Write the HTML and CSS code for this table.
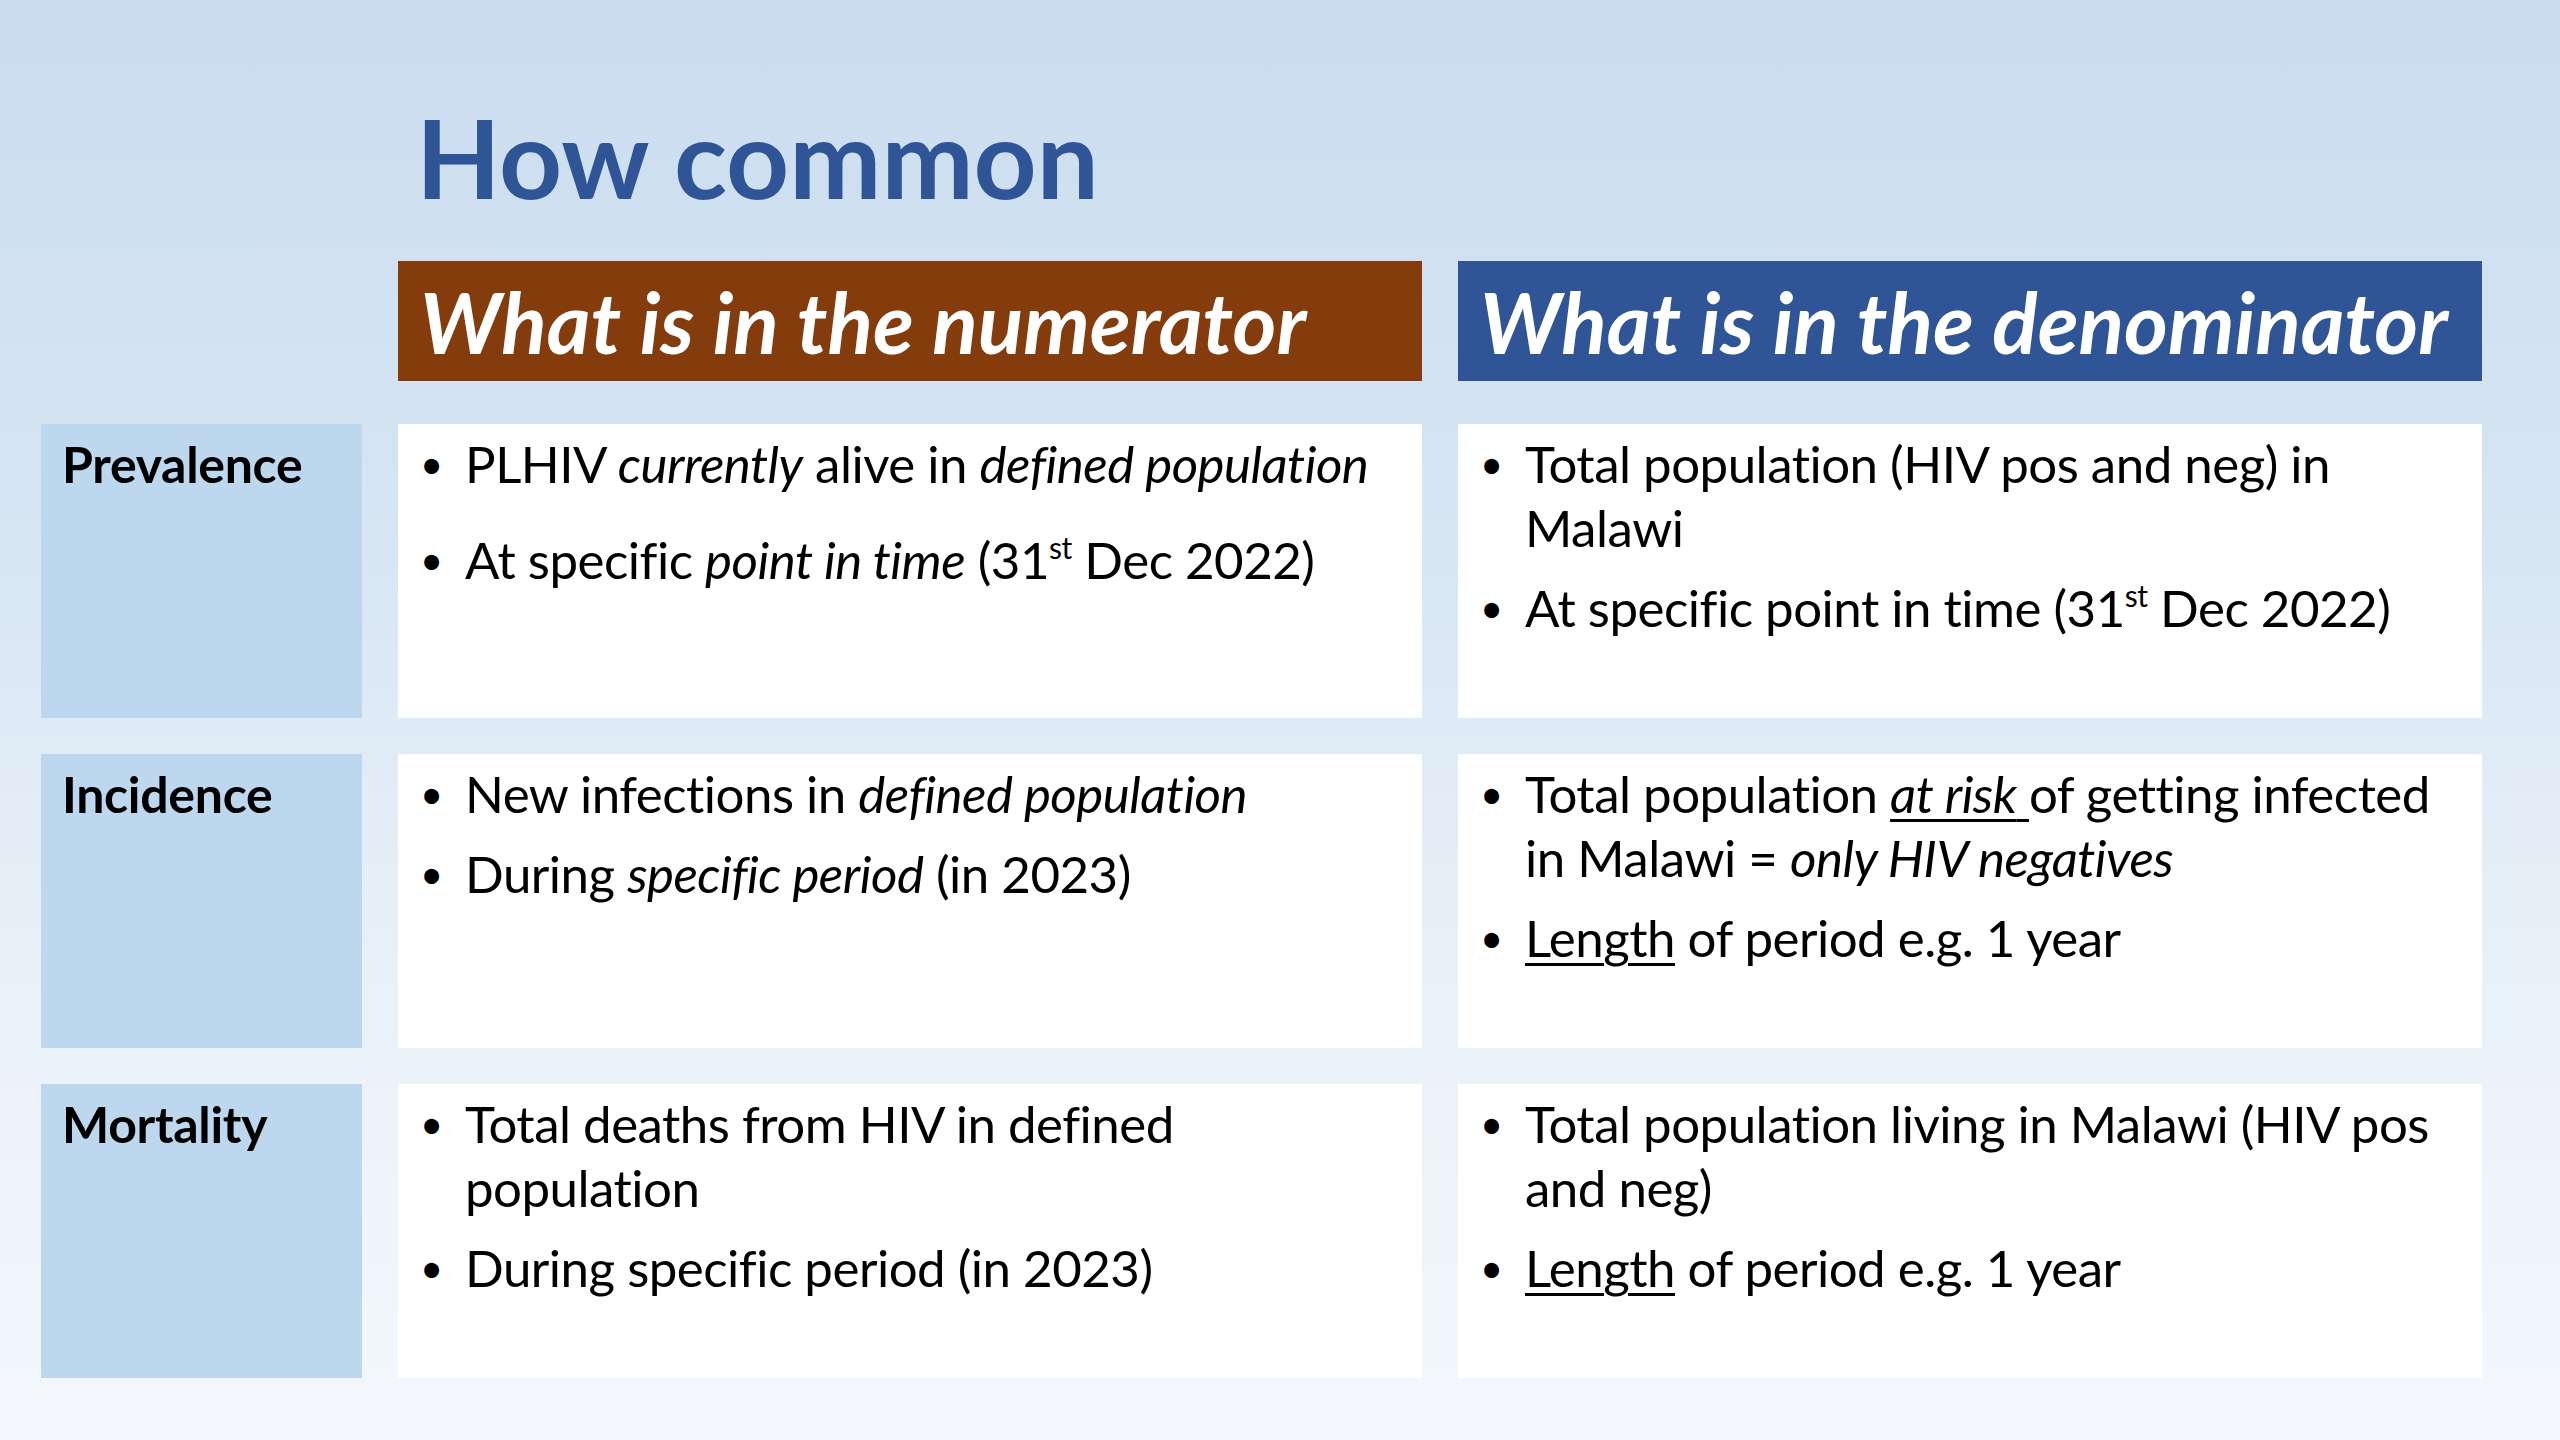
FILE: index.html
```html
<!DOCTYPE html>
<html lang="en">
<head>
<meta charset="utf-8">
<title>How common</title>
<link rel="stylesheet" href="styles.css">
</head>
<body>
<div class="slide">
  <h1 class="title">How common</h1>

  <div class="head">
    <div class="spacer"></div>
    <div class="hbox hbox-num">What is in the numerator</div>
    <div class="hbox hbox-den">What is in the denominator</div>
  </div>

  <div class="rows">
    <div class="label">Prevalence</div>
    <div class="cell">
      <ul class="list list-wide">
        <li><span class="dot">•</span><span class="txt">PLHIV <i>currently</i> alive in <i>defined population</i></span></li>
        <li><span class="dot">•</span><span class="txt">At specific <i>point in time</i> (31<sup>st</sup> Dec 2022)</span></li>
      </ul>
    </div>
    <div class="cell">
      <ul class="list">
        <li><span class="dot">•</span><span class="txt">Total population (HIV pos and neg) in<br>Malawi</span></li>
        <li><span class="dot">•</span><span class="txt">At specific point in time (31<sup>st</sup> Dec 2022)</span></li>
      </ul>
    </div>

    <div class="label">Incidence</div>
    <div class="cell">
      <ul class="list">
        <li><span class="dot">•</span><span class="txt">New infections in <i>defined population</i></span></li>
        <li><span class="dot">•</span><span class="txt">During <i>specific period</i> (in 2023)</span></li>
      </ul>
    </div>
    <div class="cell">
      <ul class="list">
        <li><span class="dot">•</span><span class="txt">Total population <u><i>at risk</i> </u>of getting infected<br>in Malawi = <i>only HIV negatives</i></span></li>
        <li><span class="dot">•</span><span class="txt"><u>Length</u> of period e.g. 1 year</span></li>
      </ul>
    </div>

    <div class="label">Mortality</div>
    <div class="cell">
      <ul class="list">
        <li><span class="dot">•</span><span class="txt">Total deaths from HIV in defined<br>population</span></li>
        <li><span class="dot">•</span><span class="txt">During specific period (in 2023)</span></li>
      </ul>
    </div>
    <div class="cell">
      <ul class="list">
        <li><span class="dot">•</span><span class="txt">Total population living in Malawi (HIV pos<br>and neg)</span></li>
        <li><span class="dot">•</span><span class="txt"><u>Length</u> of period e.g. 1 year</span></li>
      </ul>
    </div>
  </div>
</div>
</body>
</html>
```

FILE: styles.css
```css
html, body {
  margin: 0;
  padding: 0;
}

body {
  width: 2560px;
  height: 1440px;
  overflow: hidden;
  font-family: Lato, "Open Sans", "Liberation Sans", sans-serif;
  color: #000;
}

.slide {
  box-sizing: border-box;
  width: 2560px;
  height: 1440px;
  padding: 100px 78px 0 41px;
  background: linear-gradient(180deg, #cadcef 0%, #d6e5f3 35%, #e7f0f8 65%, #f4f8fc 100%);
}

.title {
  margin: 0 0 49px 375px;
  font-size: 110px;
  line-height: 112px;
  height: 112px;
  font-weight: 700;
  color: #2f5597;
}

.head {
  display: grid;
  grid-template-columns: 321px 1024px 1024px;
  column-gap: 36px;
  height: 120px;
  margin-bottom: 43px;
}

.hbox {
  display: flex;
  align-items: center;
  padding-left: 22px;
  color: #fff;
  font-size: 84px;
  font-weight: 700;
  font-style: italic;
  white-space: nowrap;
  overflow: hidden;
}

.hbox-num {
  background: #843c0c;
}

.hbox-den {
  background: #2f5597;
}

.rows {
  display: grid;
  grid-template-columns: 321px 1024px 1024px;
  grid-auto-rows: 294px;
  column-gap: 36px;
  row-gap: 36px;
}

.label {
  background: #bdd7ee;
  padding: 8px 0 0 21px;
  font-size: 50px;
  line-height: 64px;
  font-weight: 700;
  letter-spacing: -0.3px;
}

.cell {
  background: #fff;
  padding: 8px 6px 0 20px;
  font-size: 51px;
  line-height: 64px;
  letter-spacing: -0.5px;
}

.list {
  margin: 0;
  padding: 0;
  list-style: none;
  display: flex;
  flex-direction: column;
  gap: 16px;
}

.list-wide {
  gap: 32px;
}

.list li {
  display: flex;
}

.dot {
  flex: 0 0 47px;
  font-size: 40px;
  padding-left: 2px;
  box-sizing: border-box;
}

.txt {
  white-space: nowrap;
}

sup {
  font-size: 30px;
  line-height: 0;
  vertical-align: 20px;
}

u {
  text-decoration-thickness: 3px;
  text-underline-offset: 6px;
}
```
